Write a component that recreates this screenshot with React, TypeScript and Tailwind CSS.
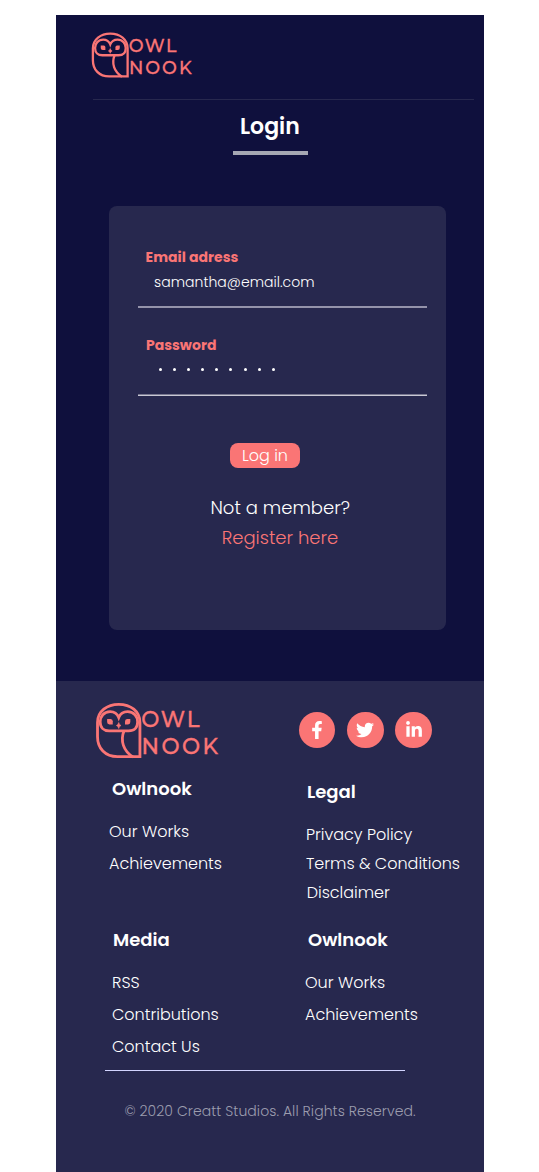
import type { ReactNode } from "react";
import { FaFacebookF, FaTwitter, FaLinkedinIn } from "react-icons/fa";

function Logo({ className }: { className: string }) {
  return (
    <svg viewBox="30 20 376 172" className={className} fill="none" stroke="#fa7575" strokeWidth="8.5">
      <path d="M165 185 H97 C60 185 37 160 37 125 V82 C37 48 66 27 101 27 C137 27 165 48 165 82 Z" />
      <path d="M101 67 C96 54 86 49 75 49 C56 49 45 64 45 80 C45 97 56 107 72 107 H131 C148 107 158 97 158 80 C158 64 147 49 128 49 C117 49 106 54 101 67 Z" />
      <path d="M117 107 C105 137 115 168 144 186" />
      <g fill="#fa7575" stroke="none">
        <path d="M66 71 H77 Q83 72 83 78 V88 H73 Q66 87 66 80 Z" />
        <path d="M136 71 H126 Q120 72 120 78 V88 H129 Q136 87 136 80 Z" />
        <path d="M101 82 Q102 89 108 91 Q102 93 101 100 Q100 93 94 91 Q100 89 101 82 Z" strokeWidth="2" stroke="#fa7575" />
      </g>
      <g fill="#fa7575" stroke="#fa7575" strokeWidth="1" fontFamily="Montserrat, Lato, sans-serif" fontSize="65" fontWeight="500">
        <text x="169" y="96" letterSpacing="6">OWL</text>
        <text x="170" y="175.5" letterSpacing="7.4">NOOK</text>
      </g>
    </svg>
  );
}

function Social({ children, label }: { children: ReactNode; label: string }) {
  return (
    <a aria-label={label} className="flex size-[36.4px] items-center justify-center rounded-full bg-[#fa7575] text-white">
      {children}
    </a>
  );
}

export default function App() {
  return (
    <div className="h-[1172px] overflow-hidden bg-white pt-[15px] pl-14 font-['Poppins','Inter',sans-serif] font-light whitespace-nowrap text-white">
      <div className="w-[428px]">
        <main className="h-[666px] bg-[#0f103d] pt-4">
          <Logo className="ml-[35px] h-12 w-[102px]" />
          <div className="mt-5 ml-[37px] h-px w-[381px] bg-[#27284e]" />
          <h1 className="mt-[11px] ml-[184px] text-[22px] leading-8 font-semibold">Login</h1>
          <div className="mt-[8px] ml-[177px] h-1 w-[75px] bg-[#a5a7b3]" />

          <form className="mt-[51px] ml-[53px] h-[424px] w-[337px] rounded-lg bg-[#27284e] pt-[41px]">
            <div className="ml-[36.6px] text-sm leading-5 font-bold tracking-[0.03px] text-[#fa7575]">Email adress</div>
            <div className="mt-[5px] ml-[45px] text-sm leading-5 tracking-[0.04px]">samantha@email.com</div>
            <div className="mt-[14px] ml-[29px] h-[2px] w-[289px] bg-[#9493aa]" />
            <div className="mt-[27px] ml-[37px] text-sm leading-5 font-bold text-[#fa7575]">Password</div>
            <div className="mt-[13px] ml-[50px] flex h-[3px] gap-[11.1px]">
              {Array.from({ length: 9 }, (_, i) => (
                <span key={i} className="size-[3px] rounded-full bg-white" />
              ))}
            </div>
            <div className="mt-[23px] ml-[29px] h-px w-[289px] bg-[#77778f]" />
            <div className="ml-[29px] h-px w-[289px] bg-[#c8c8d4]" />
            <button type="button" className="mt-[47px] ml-[121px] flex h-[25px] w-[70px] items-center justify-center rounded-lg bg-[#fa7575] text-base leading-6">
              Log in
            </button>
            <div className="mt-[25px] ml-[101.5px] text-lg leading-[30px]">Not a member?</div>
            <div className="ml-[112.7px] text-lg leading-[30px] text-[#fa7575]">Register here</div>
          </form>
        </main>

        <footer className="h-[491px] bg-[#27284e] pt-[21px]">
          <div className="flex h-[57px]">
            <Logo className="ml-[39px] h-[57px] w-[125px]" />
            <div className="mt-[10px] ml-[79px] flex gap-[11.8px]">
              <Social label="Facebook"><FaFacebookF size={18} /></Social>
              <Social label="Twitter"><FaTwitter size={18} /></Social>
              <Social label="LinkedIn"><FaLinkedinIn size={18} /></Social>
            </div>
          </div>

          <div className="mt-4 grid h-[151px] grid-cols-[249px_179px]">
            <section className="pl-[53px]">
              <h2 className="ml-[3px] text-lg leading-7 font-semibold">Owlnook</h2>
              <ul className="mt-[13px] leading-8">
                <li>Our Works</li>
                <li>Achievements</li>
              </ul>
            </section>
            <section className="pt-[3px]">
              <h2 className="ml-[2px] text-lg leading-7 font-semibold">Legal</h2>
              <ul className="mt-[14px] ml-px leading-[29px]">
                <li>Privacy Policy</li>
                <li>Terms &amp; Conditions</li>
                <li className="ml-[0.7px]">Disclaimer</li>
              </ul>
            </section>
          </div>
          <div className="grid h-[144px] grid-cols-[249px_179px]">
            <section className="pl-14">
              <h2 className="ml-px text-lg leading-7 font-semibold">Media</h2>
              <ul className="mt-[13px] leading-8">
                <li>RSS</li>
                <li>Contributions</li>
                <li>Contact Us</li>
              </ul>
            </section>
            <section>
              <h2 className="ml-[3px] text-lg leading-7 font-semibold">Owlnook</h2>
              <ul className="mt-[13px] leading-8">
                <li>Our Works</li>
                <li>Achievements</li>
              </ul>
            </section>
          </div>
          <div className="ml-[49px] h-px w-[300px] bg-[#d3d5ff]" />
          <p className="mt-[30px] ml-[68.4px] text-sm leading-5 tracking-[0.07px] text-[#9c9dae]">© 2020 Creatt Studios. All Rights Reserved.</p>
        </footer>
      </div>
    </div>
  );
}
